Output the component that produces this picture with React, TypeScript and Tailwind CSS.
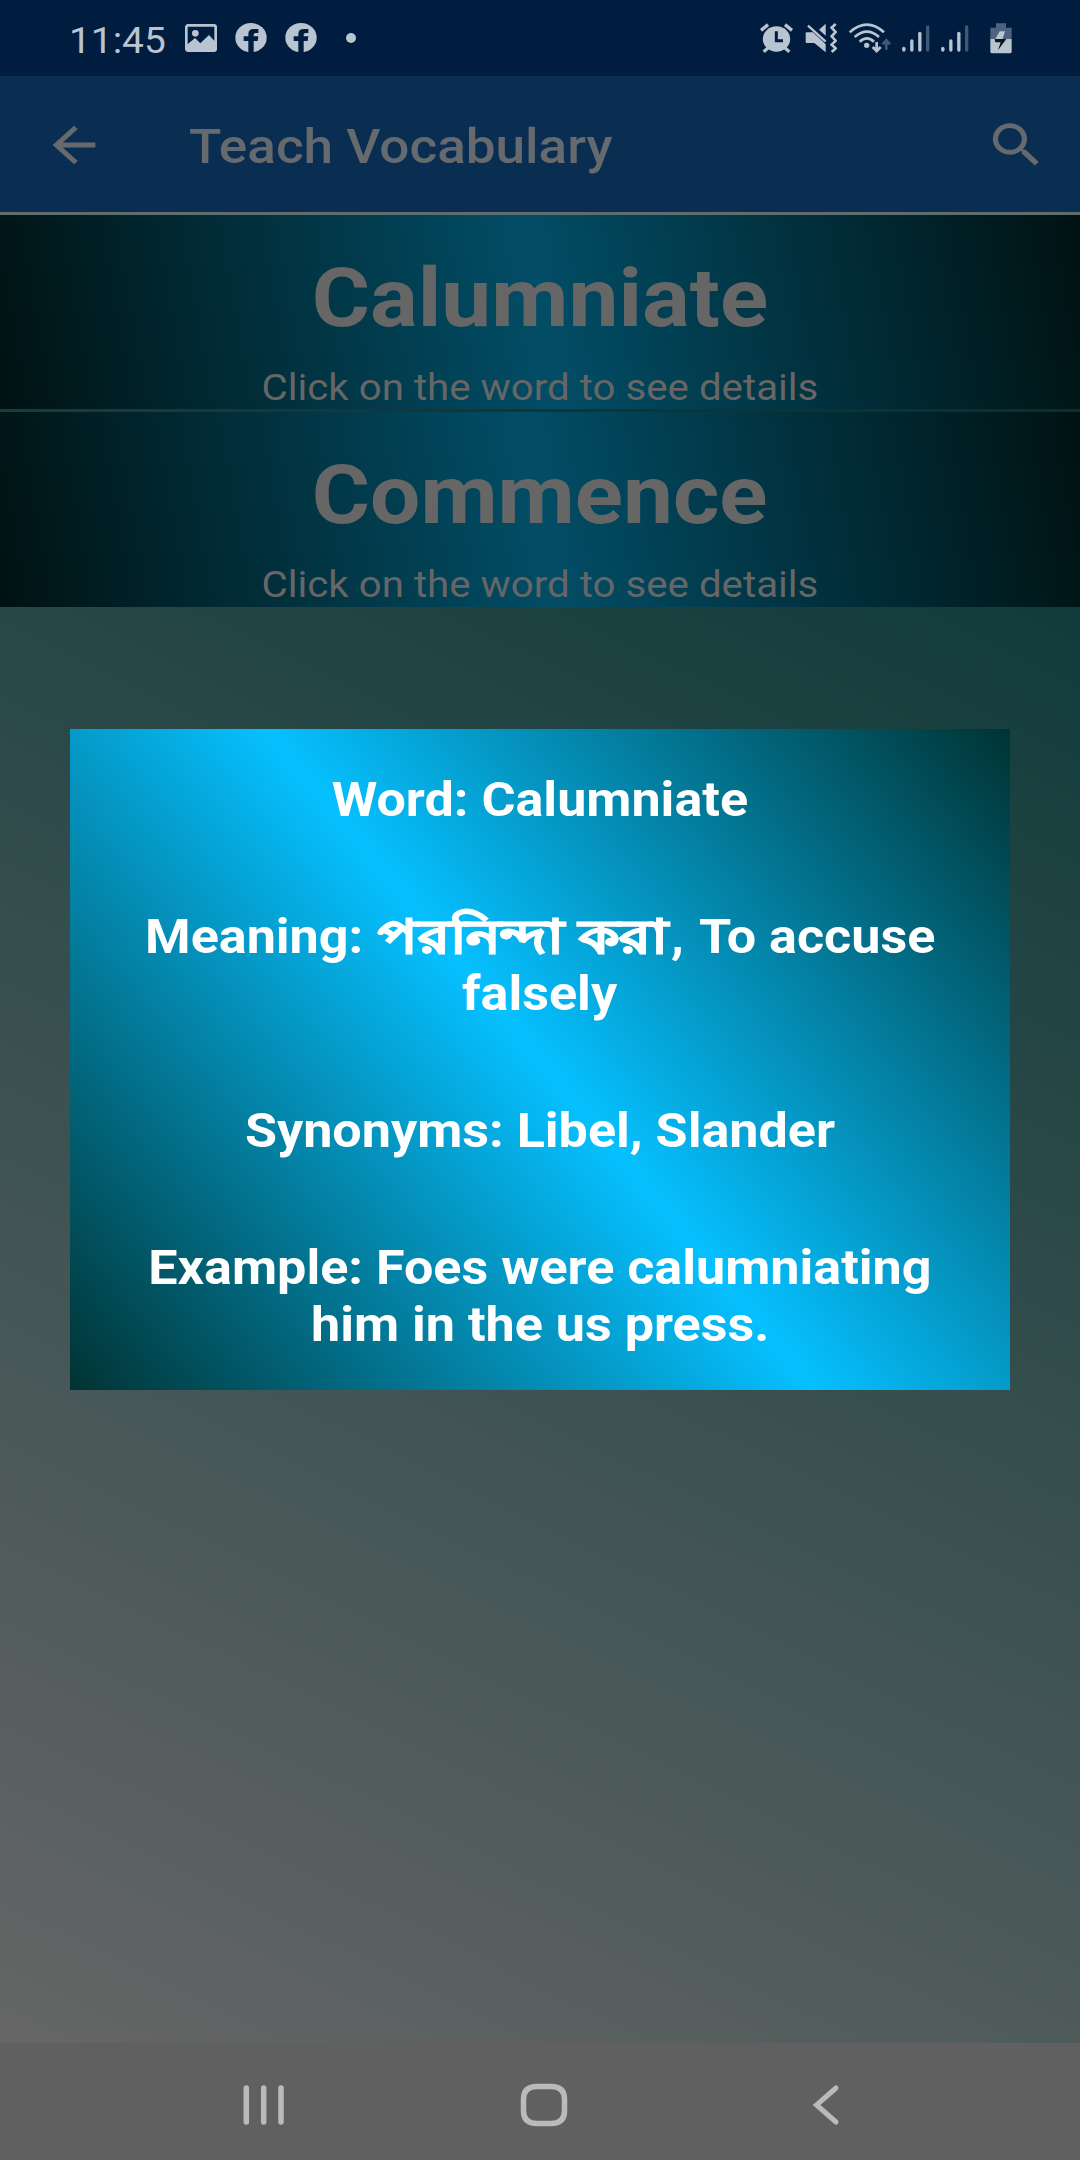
import type { ReactNode } from "react";

function FacebookIcon({ className }: { className?: string }) {
  return (
    <svg className={`h-[30px] w-8 ${className ?? ""}`} viewBox="0 0 96 90" preserveAspectRatio="none">
      <ellipse cx="48" cy="44" rx="47" ry="44" fill="#b9c4d1" />
      <path
        d="M40 90V54H26V40H40V33Q40 18 56 18H70V30H62Q56 30 56 36V40H70L68 54H56V90Z"
        fill="#001d40"
      />
    </svg>
  );
}

function SignalIcon({ className }: { className?: string }) {
  return (
    <svg className={`h-[30px] w-7 ${className ?? ""}`} viewBox="0 0 84 90" fill="none" strokeWidth="10" strokeLinecap="round">
      <g stroke="#b9c4d1">
        <path d="M5.500 76V81" />
        <path d="M29.500 54V81" />
        <path d="M53.500 31V81" />
      </g>
      <path d="M77 12V81" stroke="#405775" />
    </svg>
  );
}

function StatusBar() {
  return (
    <div className="flex h-[76px] items-center bg-[#001d40] pl-[69px] pr-[68px]">
      <span className="mt-[5px] w-[98px] origin-left scale-x-[1.08] text-4xl leading-[42px] text-[#b9c4d1]">11:45</span>
      <svg className="ml-[18px] h-7 w-8" viewBox="0 0 96 84">
        <rect x="4" y="4" width="88" height="76" rx="5" fill="none" stroke="#b9c4d1" strokeWidth="8" />
        <circle cx="31" cy="28" r="10" fill="#b9c4d1" />
        <path d="M4 64L30 42L46 58L72 33L92 55V80H4Z" fill="#b9c4d1" />
      </svg>
      <FacebookIcon className="ml-[18px]" />
      <FacebookIcon className="ml-[18px]" />
      <span className="ml-[29px] size-2.5 rounded-full bg-[#b9c4d1]" />

      <svg className="ml-auto h-[30px] w-[33px]" viewBox="0 0 99 90">
        <ellipse cx="49.500" cy="48" rx="41" ry="38" fill="#b9c4d1" />
        <g stroke="#b9c4d1" strokeWidth="10">
          <path d="M3 22L24 5" />
          <path d="M75 5L96 22" />
          <path d="M24 75L11 86" />
          <path d="M75 75L88 86" />
        </g>
        <path d="M49 25V53H69" fill="none" stroke="#001d40" strokeWidth="9" />
      </svg>
      <svg className="ml-3 h-[30px] w-8" viewBox="0 0 96 90">
        <path d="M5 28H24L62 64V88L28 60H5Q2 60 2 57V31Q2 28 5 28Z" fill="#b9c4d1" />
        <path d="M42 20L62 2V38Z" fill="#b9c4d1" />
        <path d="M8 5L62 56" stroke="#001d40" strokeWidth="6" />
        <path d="M9 8L62 56" stroke="#b9c4d1" strokeWidth="7" />
        <path d="M92 3L80 14L92 27L80 40L92 53L80 65L92 76L80 87" fill="none" stroke="#b9c4d1" strokeWidth="8" />
      </svg>
      <svg className="ml-3 h-[30px] w-[42px]" viewBox="0 0 126 90" fill="none">
        <g stroke="#b9c4d1" strokeWidth="8">
          <path d="M2 28Q54 -18 105 28" />
          <path d="M17 42Q54 10 90 42" />
          <path d="M32 56Q54 36 75 56" />
        </g>
        <circle cx="53" cy="67" r="8" fill="#b9c4d1" />
        <path d="M83 57V82M71 72L83 84L95 72" stroke="#b9c4d1" strokeWidth="8" />
        <path d="M112 80V54M101 64L112 52L123 64" stroke="#405775" strokeWidth="8" />
      </svg>
      <SignalIcon className="ml-[11px]" />
      <SignalIcon className="ml-[11px]" />
      <svg className="ml-[21px] h-[31px] w-[22px]" viewBox="0 0 66 93">
        <path d="M18 1H48V14H65V48H1V14H18Z" fill="#4d627e" />
        <path d="M1 48H65V86Q65 91 60 91H6Q1 91 1 86Z" fill="#b9c4d1" />
        <path d="M29 25H45L38 48H16Z" fill="#b9c4d1" />
        <path d="M14 48H49L24 82L32 58H16Z" fill="#0a1420" />
      </svg>
    </div>
  );
}

function Header() {
  return (
    <header className="flex h-[136px] items-center bg-[#0a2e52] pl-[42px] pr-[32px] pt-px">
      <svg className="h-[58px] w-16" viewBox="0 0 24 24" preserveAspectRatio="none" fill="#66696d">
        <path d="M20 11H7.830l5.590-5.590L12 4l-8 8 8 8 1.410-1.410L7.830 13H20v-2z" />
      </svg>
      <h1 className="ml-[83px] mt-[5px] origin-left scale-x-[1.083] whitespace-nowrap text-[49px] font-medium leading-[58px] text-[#66696d]">
        Teach Vocabulary
      </h1>
      <svg className="ml-auto h-[58px] w-[63px]" viewBox="0 0 24 24" preserveAspectRatio="none" fill="#66696d">
        <path d="M15.500 14h-.790l-.280-.270A6.471 6.471 0 0 0 16 9.500 6.500 6.500 0 1 0 9.500 16c1.610 0 3.090-.590 4.230-1.570l.270.280v.790l5 4.990L20.490 19l-4.990-5zm-6 0C7.010 14 5 11.990 5 9.500S7.010 5 9.500 5 14 7.010 14 9.500 11.990 14 9.500 14z" />
      </svg>
    </header>
  );
}

function WordRow({ word }: { word: string }) {
  return (
    <div className="flex h-[194px] flex-col items-center bg-[linear-gradient(79.8deg,#001212,#024d66,#001212)] pt-[35px] text-[#666666] last:h-[195px]">
      <h2 className="scale-x-[1.087] text-[82px] font-bold leading-[96px]">{word}</h2>
      <p className="mt-5 scale-x-[1.088] text-[37px] leading-[43px]">Click on the word to see details</p>
    </div>
  );
}

function Line({ children }: { children: ReactNode }) {
  return <p className="h-[57px] scale-x-[1.085] whitespace-nowrap leading-[57px]">{children}</p>;
}

function DetailsDialog() {
  return (
    <div className="absolute left-[70px] top-[729px] flex h-[661px] w-[940px] flex-col items-center gap-20 bg-[linear-gradient(50.3deg,#003333,#06c0ff,#003333)] pt-[42px] text-5xl font-bold text-white">
      <div>
        <Line>Word: Calumniate</Line>
      </div>
      <div className="flex flex-col items-center">
        <Line>
          Meaning:{" "}
          <span className="ml-[18px] mr-[18px] inline-block scale-x-[1.135] text-[47px] leading-none [-webkit-text-stroke:1.6px_white]">
            পরনিন্দা করা
          </span>
          , <span className="ml-0.5">To accuse</span>
        </Line>
        <Line>falsely</Line>
      </div>
      <div>
        <Line>Synonyms: Libel, Slander</Line>
      </div>
      <div className="flex flex-col items-center">
        <Line>Example: Foes were calumniating</Line>
        <Line>him in the us press.</Line>
      </div>
    </div>
  );
}

function NavBar() {
  return (
    <nav className="flex h-[117px] items-center bg-[#606060] pl-[243px] pt-[6px]">
      <svg className="h-[42px] w-[42px]" viewBox="0 0 42 42" stroke="#bababa" strokeWidth="5.500" strokeLinecap="round">
        <path d="M3.300 4V38M20.700 4V38M38 4V38" />
      </svg>
      <svg className="ml-[235px] h-[44px] w-[48px]" viewBox="0 0 48 44" fill="none">
        <path
          d="M17 3.500H31C40.500 3.500 44.500 8 44.500 16V28C44.500 36 40.500 40.500 31 40.500H17C7.500 40.500 3.500 36 3.500 28V16C3.500 8 7.500 3.500 17 3.500Z"
          stroke="#bababa"
          strokeWidth="5.500"
        />
      </svg>
      <svg className="ml-[244px] h-[42px] w-[28px]" viewBox="0 0 28 42" fill="none" stroke="#bababa" strokeWidth="5" strokeLinecap="round">
        <path d="M24 4L4.500 21L24 38" />
      </svg>
    </nav>
  );
}

export default function App() {
  return (
    <div className="relative flex h-[2160px] w-[1080px] flex-col overflow-hidden bg-black font-[Roboto,'Noto_Sans',sans-serif]">
      <StatusBar />
      <Header />
      <div className="h-[3px] bg-[#626b6e]" />
      <main className="h-[1828px] bg-[linear-gradient(26deg,#666666,#003333)]">
        <WordRow word="Calumniate" />
        <div className="h-[3px] bg-black/10" />
        <WordRow word="Commence" />
      </main>
      <NavBar />
      <DetailsDialog />
    </div>
  );
}
